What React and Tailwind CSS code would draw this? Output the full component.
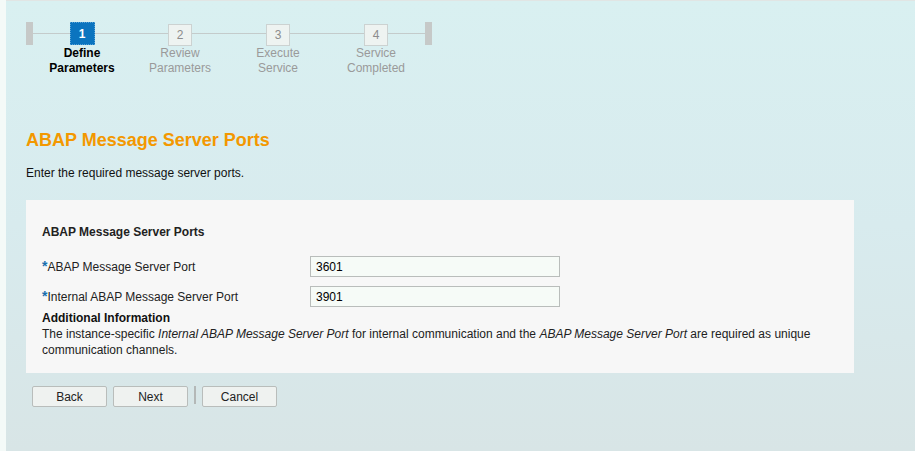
import React from 'react';

const steps = [
  { n: 1, label: ['Define', 'Parameters'], active: true },
  { n: 2, label: ['Review', 'Parameters'] },
  { n: 3, label: ['Execute', 'Service'] },
  { n: 4, label: ['Service', 'Completed'] },
];

const Stepper = () => (
  <div className="flex items-start pl-[20px]">
    <div className="w-[7px] h-[23px] bg-[#c6c9c8]" />
    {steps.map((s) => (
      <div key={s.n} className="w-[98px] flex flex-col items-center">
        <div className="w-full h-[23px] flex items-center">
          <div className="flex-1 h-px bg-[#c4cbcb]" />
          {s.active ? (
            <div className="w-[25px] h-[23px] bg-[#0b74bf] border border-dotted border-[#5aa3d8] flex items-center justify-center text-white font-bold text-[12px]">
              {s.n}
            </div>
          ) : (
            <div className="w-[24px] h-[22px] mt-[2px] bg-[#eef3f1] border border-[#ccd2d1] flex items-center justify-center text-[#8c8c8c] text-[12px]">
              {s.n}
            </div>
          )}
          <div className="flex-1 h-px bg-[#c4cbcb]" />
        </div>
        <div
          className={
            'mt-[1px] text-center text-[12px] leading-[15px] ' +
            (s.active ? 'font-bold text-black' : 'text-[#9a9a9a]')
          }
        >
          {s.label[0]}
          <br />
          {s.label[1]}
        </div>
      </div>
    ))}
    <div className="w-[7px] h-[23px] bg-[#c6c9c8]" />
  </div>
);

const Field = ({ label, value }) => (
  <div className="flex items-center h-[21px]">
    <div className="w-[268px] text-[12px] text-[#222]">
      <span className="text-[#1a6fae] font-bold text-[14px] leading-none">*</span>
      {label}
    </div>
    <div className="w-[250px] h-[21px] border border-[#b9bdbb] bg-[#f6fbf7] px-[5px] flex items-center text-[12px] text-black">
      {value}
    </div>
  </div>
);

const Button = ({ children }) => (
  <button className="w-[75px] h-[21px] bg-[#eff2f0] border border-[#b9bdbb] rounded-[2px] text-[12px] text-[#222] flex items-center justify-center">
    {children}
  </button>
);

export default function App() {
  return (
    <div
      className="w-[915px] h-[451px] bg-[#f4faf8] pl-[6px] overflow-hidden"
      style={{ fontFamily: '"Liberation Sans", Arial, sans-serif' }}
    >
      <div className="h-full border-t border-[#e1e5e4] bg-gradient-to-b from-[#d9f0f1] via-[#d8ebee] to-[#d8e5e6] pt-[21px]">
        <Stepper />

        <div className="pl-[20px] pt-[54px]">
          <h1 className="text-[18px] font-bold text-[#f39800] leading-[21px]">ABAP Message Server Ports</h1>
          <p className="mt-[15px] text-[12px] text-[#111] leading-[15px]">Enter the required message server ports.</p>

          <div className="mt-[19px] w-[828px] bg-[#f7f7f7] pl-[16px] pt-[25px] pb-[15px]">
            <div className="text-[12px] font-bold text-[#222] leading-[15px]">ABAP Message Server Ports</div>
            <div className="mt-[16px] flex flex-col gap-[9px]">
              <Field label="ABAP Message Server Port" value="3601" />
              <Field label="Internal ABAP Message Server Port" value="3901" />
            </div>
            <div className="mt-[4px] text-[12px] font-bold text-[#111] leading-[15px]">Additional Information</div>
            <p className="text-[12px] text-[#222] leading-[16px] pr-[16px]">
              The instance-specific <i>Internal ABAP Message Server Port</i> for internal communication and the{' '}
              <i>ABAP Message Server Port</i> are required as unique communication channels.
            </p>
          </div>

          <div className="mt-[13px] pl-[6px] flex items-start gap-[6px]">
            <Button>Back</Button>
            <Button>Next</Button>
            <div className="w-[2px] h-[18px] bg-[#b4b8b7]" />
            <Button>Cancel</Button>
          </div>
        </div>
      </div>
    </div>
  );
}
